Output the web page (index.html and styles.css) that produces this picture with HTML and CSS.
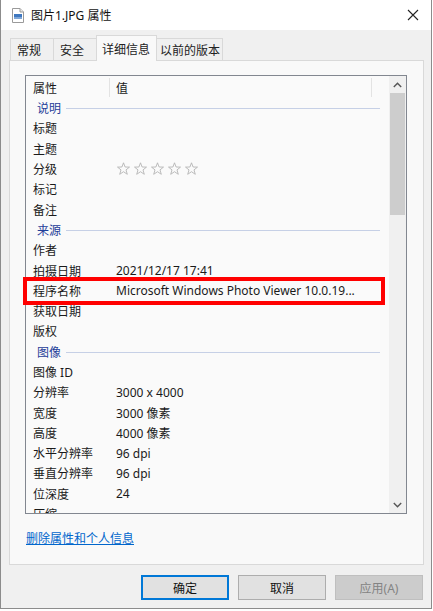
FILE: index.html
```html
<!DOCTYPE html>
<html lang="zh-CN">
<head>
<meta charset="utf-8">
<title>图片1.JPG 属性</title>
<link rel="stylesheet" href="styles.css">
</head>
<body>
<div class="window">
  <div class="titlebar">
    <svg class="file-icon" width="12" height="15" viewBox="0 0 12 15">
      <path d="M0.5 0.5 H8 L11.5 4 V14.5 H0.5 Z" fill="#fff" stroke="#9a9a9a"/>
      <path d="M8 0.5 V4 H11.5" fill="#e8e8e8" stroke="#9a9a9a"/>
      <rect x="2" y="6" width="8" height="3" fill="#3f78c0"/>
      <rect x="2" y="9" width="8" height="2" fill="#7fa6d6"/>
    </svg>
    <span class="title">图片1.JPG 属性</span>
    <svg class="close" width="12" height="12" viewBox="0 0 12 12">
      <path d="M1 1 L11 11 M11 1 L1 11" stroke="#222" stroke-width="1.1"/>
    </svg>
  </div>

  <div class="tabs">
    <div class="tab">常规</div>
    <div class="tab">安全</div>
    <div class="tab active">详细信息</div>
    <div class="tab">以前的版本</div>
  </div>

  <div class="panel">
    <div class="listbox">
      <div class="list">
        <div class="header">
          <div class="hcell hname">属性</div>
          <div class="hcell hval">值</div>
        </div>
        <div class="rows">
          <div class="group"><span>说明</span><i></i></div>
          <div class="row"><span class="k">标题</span><span class="v"></span></div>
          <div class="row"><span class="k">主题</span><span class="v"></span></div>
          <div class="row"><span class="k">分级</span><span class="v stars">
            <svg width="90" height="14" viewBox="0 0 90 14">
              <g fill="none" stroke="#b4b4b4" stroke-width="0.9">
                <polygon points="6.5,0.8 8.1,5 12.5,5.1 9,7.9 10.3,12.3 6.5,9.7 2.7,12.3 4,7.9 0.5,5.1 4.9,5"/>
                <polygon transform="translate(17,0)" points="6.5,0.8 8.1,5 12.5,5.1 9,7.9 10.3,12.3 6.5,9.7 2.7,12.3 4,7.9 0.5,5.1 4.9,5"/>
                <polygon transform="translate(34,0)" points="6.5,0.8 8.1,5 12.5,5.1 9,7.9 10.3,12.3 6.5,9.7 2.7,12.3 4,7.9 0.5,5.1 4.9,5"/>
                <polygon transform="translate(51,0)" points="6.5,0.8 8.1,5 12.5,5.1 9,7.9 10.3,12.3 6.5,9.7 2.7,12.3 4,7.9 0.5,5.1 4.9,5"/>
                <polygon transform="translate(68,0)" points="6.5,0.8 8.1,5 12.5,5.1 9,7.9 10.3,12.3 6.5,9.7 2.7,12.3 4,7.9 0.5,5.1 4.9,5"/>
              </g>
            </svg>
          </span></div>
          <div class="row"><span class="k">标记</span><span class="v"></span></div>
          <div class="row"><span class="k">备注</span><span class="v"></span></div>
          <div class="group"><span>来源</span><i></i></div>
          <div class="row"><span class="k">作者</span><span class="v"></span></div>
          <div class="row"><span class="k">拍摄日期</span><span class="v">2021/12/17 17:41</span></div>
          <div class="row"><span class="k">程序名称</span><span class="v">Microsoft Windows Photo Viewer 10.0.19...</span></div>
          <div class="row"><span class="k">获取日期</span><span class="v"></span></div>
          <div class="row"><span class="k">版权</span><span class="v"></span></div>
          <div class="group"><span>图像</span><i></i></div>
          <div class="row"><span class="k">图像 ID</span><span class="v"></span></div>
          <div class="row"><span class="k">分辨率</span><span class="v">3000 x 4000</span></div>
          <div class="row"><span class="k">宽度</span><span class="v">3000 像素</span></div>
          <div class="row"><span class="k">高度</span><span class="v">4000 像素</span></div>
          <div class="row"><span class="k">水平分辨率</span><span class="v">96 dpi</span></div>
          <div class="row"><span class="k">垂直分辨率</span><span class="v">96 dpi</span></div>
          <div class="row"><span class="k">位深度</span><span class="v">24</span></div>
          <div class="row"><span class="k">压缩</span><span class="v"></span></div>
        </div>
      </div>
      <div class="scrollbar">
        <div class="arrow">
          <svg width="9" height="6" viewBox="0 0 9 6"><path d="M0.8 5 L4.5 1.3 L8.2 5" fill="none" stroke="#555" stroke-width="1.4"/></svg>
        </div>
        <div class="thumb"></div>
        <div class="track"></div>
        <div class="arrow">
          <svg width="9" height="6" viewBox="0 0 9 6"><path d="M0.8 1 L4.5 4.7 L8.2 1" fill="none" stroke="#555" stroke-width="1.4"/></svg>
        </div>
      </div>
    </div>
    <a class="link" href="#">删除属性和个人信息</a>
  </div>

  <div class="buttons">
    <div class="btn default">确定</div>
    <div class="btn">取消</div>
    <div class="btn disabled">应用(A)</div>
  </div>

  <div class="highlight"></div>
</div>
</body>
</html>
```

FILE: styles.css
```css
* { box-sizing: border-box; }

html, body {
  margin: 0;
  padding: 0;
  background: #ffffff;
}

body {
  font-family: "Noto Sans", "Noto Sans CJK SC", sans-serif;
  font-size: 12px;
  color: #1a1a1a;
}

.window {
  position: relative;
  width: 432px;
  height: 609px;
  background: #f0f0f0;
  border-left: 1px solid #8c8c8c;
  border-right: 1px solid #8c8c8c;
  border-bottom: 1px solid #8c8c8c;
  display: flex;
  flex-direction: column;
}

.titlebar {
  height: 30px;
  background: #ffffff;
  display: flex;
  align-items: center;
  padding-left: 11px;
  padding-right: 11px;
}

.file-icon {
  flex: none;
}

.title {
  margin-left: 7px;
  font-size: 12px;
  color: #111;
  flex: 1;
}

.close {
  flex: none;
  margin-right: 1px;
}

.tabs {
  margin-top: 5px;
  margin-left: 9px;
  height: 25px;
  display: flex;
  align-items: flex-end;
  position: relative;
  z-index: 2;
}

.tab {
  height: 22px;
  padding: 0 6px;
  border: 1px solid #d9d9d9;
  border-bottom: none;
  background: #f0f0f0;
  display: flex;
  align-items: center;
  font-size: 12px;
  color: #222;
  margin-right: -1px;
  white-space: nowrap;
  flex: none;
}

.tab:first-child { width: 44px; }
.tab:nth-child(2) { width: 44px; }
.tab:nth-child(4) { width: 67px; padding: 0 3px; }

.tab.active {
  height: 26px;
  margin-bottom: -1px;
  background: #f9f9f9;
  width: 61px;
  padding: 0 5px;
  position: relative;
  z-index: 3;
}

.panel {
  margin-left: 8px;
  width: 415px;
  height: 505px;
  background: #f9f9f9;
  border: 1px solid #d9d9d9;
  padding: 14px 15px 0 15px;
  display: flex;
  flex-direction: column;
}

.listbox {
  width: 382px;
  height: 439px;
  border: 1px solid #828790;
  background: #fafafa;
  display: flex;
  overflow: hidden;
}

.list {
  flex: 1;
  overflow: hidden;
}

.header {
  height: 22px;
  display: flex;
  align-items: stretch;
}

.hcell {
  display: flex;
  align-items: center;
}

.hname {
  width: 84px;
  padding-left: 7px;
  border-right: 1px solid #e3e3e3;
  margin-top: 2px;
  margin-bottom: 1px;
}

.hval {
  width: 262px;
  padding-left: 6px;
  border-right: 1px solid #e3e3e3;
  margin-top: 2px;
  margin-bottom: 1px;
}

.rows {
  display: flex;
  flex-direction: column;
}

.row, .group {
  height: 20.3px;
  display: flex;
  align-items: center;
  flex: none;
}

.k {
  width: 84px;
  padding-left: 7px;
  white-space: nowrap;
}

.v {
  padding-left: 6px;
  white-space: nowrap;
}

.stars {
  display: flex;
  align-items: center;
  padding-left: 7px;
}

.group {
  padding-left: 11px;
  padding-right: 9px;
  color: #1f3d99;
}

.group i {
  flex: 1;
  height: 1px;
  margin-left: 5px;
  margin-top: 1px;
  background: #c6d0e6;
}

.scrollbar {
  width: 17px;
  flex: none;
  background: #f0f0f0;
  display: flex;
  flex-direction: column;
}

.arrow {
  height: 17px;
  display: flex;
  align-items: center;
  justify-content: center;
  flex: none;
}

.thumb {
  height: 122px;
  margin: 0 1px;
  background: #cdcdcd;
  flex: none;
}

.track {
  flex: 1;
}

.link {
  margin-top: 15px;
  align-self: flex-start;
  color: #0066cc;
  text-decoration: underline;
  font-size: 12px;
  margin-left: 1px;
}

.buttons {
  margin-top: 10px;
  display: flex;
  justify-content: flex-end;
  gap: 9px;
  padding-right: 8px;
}

.btn {
  width: 88px;
  height: 25px;
  background: #e1e1e1;
  border: 1px solid #adadad;
  display: flex;
  align-items: center;
  justify-content: center;
  font-size: 12px;
  color: #111;
}

.btn.default {
  border: 2px solid #0078d7;
}

.btn.disabled {
  background: #cccccc;
  border-color: #bfbfbf;
  color: #838383;
}

.highlight {
  position: absolute;
  left: 22px;
  top: 277px;
  width: 362px;
  height: 28px;
  border: 4px solid #ff0000;
  pointer-events: none;
}
```
